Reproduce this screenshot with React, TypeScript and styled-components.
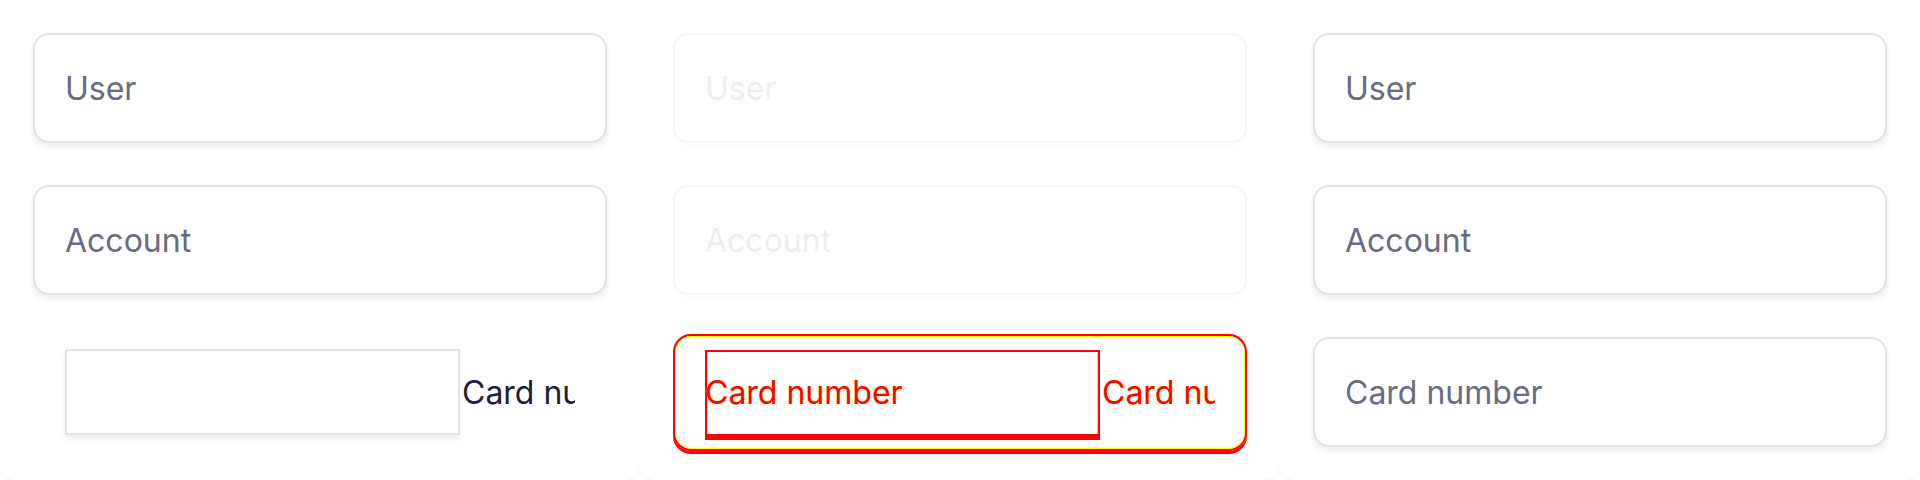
import React from 'react'
import styled, { createGlobalStyle, css } from 'styled-components'

const GlobalStyle = createGlobalStyle`
  html, body {
    margin: 0;
    padding: 0;
    background: #ffffff;
  }
  * {
    box-sizing: border-box;
  }
`

const Page = styled.div`
  display: flex;
  width: 1920px;
  height: 480px;
  overflow: hidden;
  font-family: Inter, 'Noto Sans', sans-serif;
`

const Panel = styled.div`
  width: 640px;
  height: 480px;
  flex-shrink: 0;
  display: flex;
  flex-direction: column;
  gap: 42px;
  padding: 33px;
  background: #fff;
  border-radius: 0 0 16px 16px;
  box-shadow: 0 2px 3px -1px rgba(0, 0, 0, 0.07);
`

const Field = styled.div<{ $faint?: boolean }>`
  height: 110px;
  flex-shrink: 0;
  display: flex;
  align-items: center;
  padding: 0 30px;
  border: 2px solid #e4e4e7;
  border-radius: 16px;
  background: #fff;
  box-shadow: 0 4px 6px rgba(0, 0, 0, 0.07);
  font-size: 32px;
  color: #696b80;

  ${({ $faint }) =>
    $faint &&
    css`
      border-color: #f7f7f8;
      color: #efeff1;
      box-shadow: 0 4px 6px rgba(0, 0, 0, 0.015);
    `}
`

const BrokenRow = styled.div`
  height: 110px;
  flex-shrink: 0;
  display: flex;
  align-items: center;
  padding: 0 30px;
  border: 2px solid transparent;
  font-size: 32px;
`

const BareInput = styled.div`
  width: 395px;
  height: 86px;
  flex-shrink: 0;
  border: 2px solid #e5e5e5;
  background: #fff;
  box-shadow: 0 4px 6px rgba(0, 0, 0, 0.07);
`

const Overflow = styled.span<{ $diff?: boolean }>`
  margin-left: 2px;
  width: 113px;
  overflow: hidden;
  white-space: nowrap;
  color: #1b1c3b;

  ${({ $diff }) =>
    $diff &&
    css`
      color: #ff0000;
      text-shadow: 0 0 1px rgba(255, 255, 0, 0.9);
    `}
`

const DiffRow = styled.div`
  height: 117px;
  margin-top: -3px;
  flex-shrink: 0;
  display: flex;
  align-items: center;
  padding: 0 30px;
  border: 2px solid #ff0000;
  border-radius: 18px;
  box-shadow: inset 0 0 0 1px #ffff00, 0 3px 0 #ff0000;
  font-size: 32px;
`

const DiffBox = styled.div`
  width: 395px;
  height: 86px;
  flex-shrink: 0;
  display: flex;
  align-items: center;
  border: 2px solid #ff0000;
  box-shadow: inset 1px 0 0 #ffff00, inset -1px 0 0 #ffff00, 0 4px 0 #ff0000;
`

const DiffText = styled.span`
  margin-left: -2px;
  color: #ff0000;
  white-space: nowrap;
  text-shadow: 0 0 1px rgba(255, 255, 0, 0.9);
`

const App = () => {
  return (
    <>
      <GlobalStyle />
      <Page>
        <Panel>
          <Field>User</Field>
          <Field>Account</Field>
          <BrokenRow>
            <BareInput />
            <Overflow>Card number</Overflow>
          </BrokenRow>
        </Panel>
        <Panel>
          <Field $faint>User</Field>
          <Field $faint>Account</Field>
          <DiffRow>
            <DiffBox>
              <DiffText>Card number</DiffText>
            </DiffBox>
            <Overflow $diff>Card number</Overflow>
          </DiffRow>
        </Panel>
        <Panel>
          <Field>User</Field>
          <Field>Account</Field>
          <Field>Card number</Field>
        </Panel>
      </Page>
    </>
  )
}

export default App
